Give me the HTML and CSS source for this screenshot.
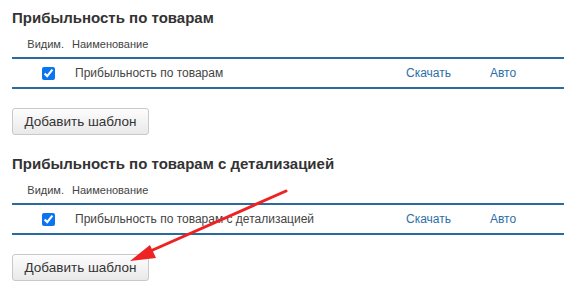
FILE: index.html
```html
<!DOCTYPE html>
<html>
<head>
	<title>Шаблоны отчётов</title>
	<link rel="stylesheet" href="styles.css">
</head>
<body>
	<div class="page">
		<section class="report">
			<h2>Прибыльность по товарам</h2>
			<div class="head">
				<span class="c-vis">Видим.</span>
				<span class="c-name">Наименование</span>
			</div>
			<div class="rows">
				<div class="row">
					<span class="c-vis"><input type="checkbox" checked></span>
					<span class="c-name">Прибыльность по товарам</span>
					<a class="c-dl" href="#">Скачать</a>
					<a class="c-auto" href="#">Авто</a>
				</div>
			</div>
			<button class="add">Добавить шаблон</button>
		</section>

		<section class="report">
			<h2>Прибыльность по товарам с детализацией</h2>
			<div class="head">
				<span class="c-vis">Видим.</span>
				<span class="c-name">Наименование</span>
			</div>
			<div class="rows">
				<div class="row">
					<span class="c-vis"><input type="checkbox" checked></span>
					<span class="c-name">Прибыльность по товарам с детализацией</span>
					<a class="c-dl" href="#">Скачать</a>
					<a class="c-auto" href="#">Авто</a>
				</div>
			</div>
			<button class="add">Добавить шаблон</button>
		</section>

		<svg class="arrow" width="570" height="290" viewBox="0 0 570 290">
			<line x1="286" y1="191" x2="146" y2="253" stroke="#ee2222" stroke-width="3" stroke-linecap="round"/>
			<polygon points="130,261 150,245 156,258" fill="#ee2222"/>
		</svg>
	</div>
</body>
</html>
```

FILE: styles.css
```css
body { margin: 0; font-family: "Liberation Sans", Arial, sans-serif; color: #333; }
.page { position: relative; width: 570px; height: 290px; padding: 0 6px 0 12px; box-sizing: border-box; }
.report { display: flex; flex-direction: column; align-items: flex-start; height: 146px; }
.report h2 { margin: 0; padding-top: 9px; font-size: 15px; line-height: 18px; font-weight: bold; color: #333; }
.head { display: flex; align-items: center; height: 18px; margin-top: 8px; font-size: 11px; color: #444; }
.head .c-vis { width: 52px; text-align: right; }
.head .c-name { margin-left: 8px; }
.rows { width: 552px; border-top: 2px solid #2b6a9c; border-bottom: 2px solid #2b6a9c; margin-top: 4px; }
.row { display: flex; align-items: center; height: 28px; font-size: 12px; color: #444; }
.row .c-vis { width: 63px; display: flex; }
.row input { margin: 0 0 0 30px; width: 13px; height: 13px; accent-color: #0b75f0; }
.row .c-name { width: 331px; }
.row a { color: #2b6fa8; text-decoration: none; }
.row .c-dl { width: 84px; }
.add { margin-top: 19px; height: 27px; width: 137px; padding: 0; font-family: inherit; font-size: 13.5px; color: #333;
	border: 1px solid #c9c9c9; border-radius: 3px; background: linear-gradient(#fdfdfd, #e9e9e9); }
.arrow { position: absolute; left: 0; top: 0; pointer-events: none; }
```
